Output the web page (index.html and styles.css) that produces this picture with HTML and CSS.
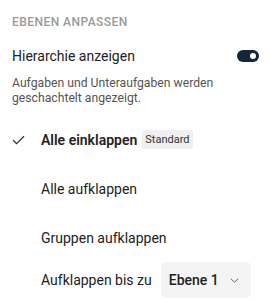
FILE: index.html
```html
<!DOCTYPE html>
<html lang="de">
<head>
<meta charset="utf-8">
<link rel="stylesheet" href="styles.css">
</head>
<body>
<div class="panel">
  <div class="section-title">EBENEN ANPASSEN</div>
  <div class="setting">
    <span class="setting-label">Hierarchie anzeigen</span>
    <span class="toggle"><span class="knob"></span></span>
  </div>
  <p class="desc">Aufgaben und Unteraufgaben werden geschachtelt angezeigt.</p>
  <ul class="options">
    <li class="option selected">
      <span class="check"><svg width="13" height="10" viewBox="0 0 13 10"><path d="M1 5.2 L4.6 8.6 L12 1.2" fill="none" stroke="#333" stroke-width="1.3"/></svg></span>
      <span class="option-label">Alle einklappen</span>
      <span class="badge">Standard</span>
    </li>
    <li class="option"><span class="check"></span><span class="option-label">Alle aufklappen</span></li>
    <li class="option"><span class="check"></span><span class="option-label">Gruppen aufklappen</span></li>
    <li class="option option-select">
      <span class="check"></span>
      <span class="option-label">Aufklappen bis zu</span>
      <span class="select">Ebene 1
        <svg class="chev" width="9" height="5" viewBox="0 0 9 5"><path d="M0.8 0.8 L4.5 4.2 L8.2 0.8" fill="none" stroke="#666" stroke-width="1"/></svg>
      </span>
    </li>
  </ul>
</div>
</body>
</html>
```
FILE: styles.css
```css
* { box-sizing: border-box; }
html, body { margin: 0; background: #fff; }
body { font-family: Roboto, "Noto Sans", Arial, sans-serif; color: #222; }
.panel { width: 270px; padding: 14px 11px 0 12px; }
.section-title {
  font-size: 12px; line-height: 16px; font-weight: 500;
  letter-spacing: 0.45px; color: #9a9a9a;
}
.setting {
  display: flex; align-items: center; justify-content: space-between;
  margin-top: 15px; height: 22px;
}
.setting-label { font-size: 14px; line-height: 22px; color: #222; }
.toggle {
  width: 22px; height: 12px; border-radius: 6px; background: #14273a;
  display: flex; align-items: center; justify-content: flex-end; padding-right: 3px;
}
.knob { width: 6px; height: 6px; border-radius: 50%; background: #fff; }
.desc {
  margin: 9px 0 0; font-size: 12.2px; line-height: 15px; color: #555;
  width: 215px;
}
.options { list-style: none; margin: 9px 0 0; padding: 0; }
.option {
  display: flex; align-items: center; height: 49px;
  font-size: 14px; color: #222;
}
.check { width: 29px; flex: none; display: flex; align-items: center; padding-top: 1px; }
.selected .option-label { font-weight: 600; }
.badge {
  margin-left: 5px; background: #efefef; border-radius: 3px;
  font-size: 11px; line-height: 19px; padding: 0 3px; color: #333;
}
.option-select { height: 36px; }
.select {
  margin-left: 9px; display: flex; align-items: center; justify-content: space-between;
  width: 90px; height: 36px; padding: 0 12px 0 8px;
  background: #f4f4f4; border-radius: 5px; font-size: 14px; font-weight: 500; color: #222;
}
.chev { margin-top: 1px; }
```
